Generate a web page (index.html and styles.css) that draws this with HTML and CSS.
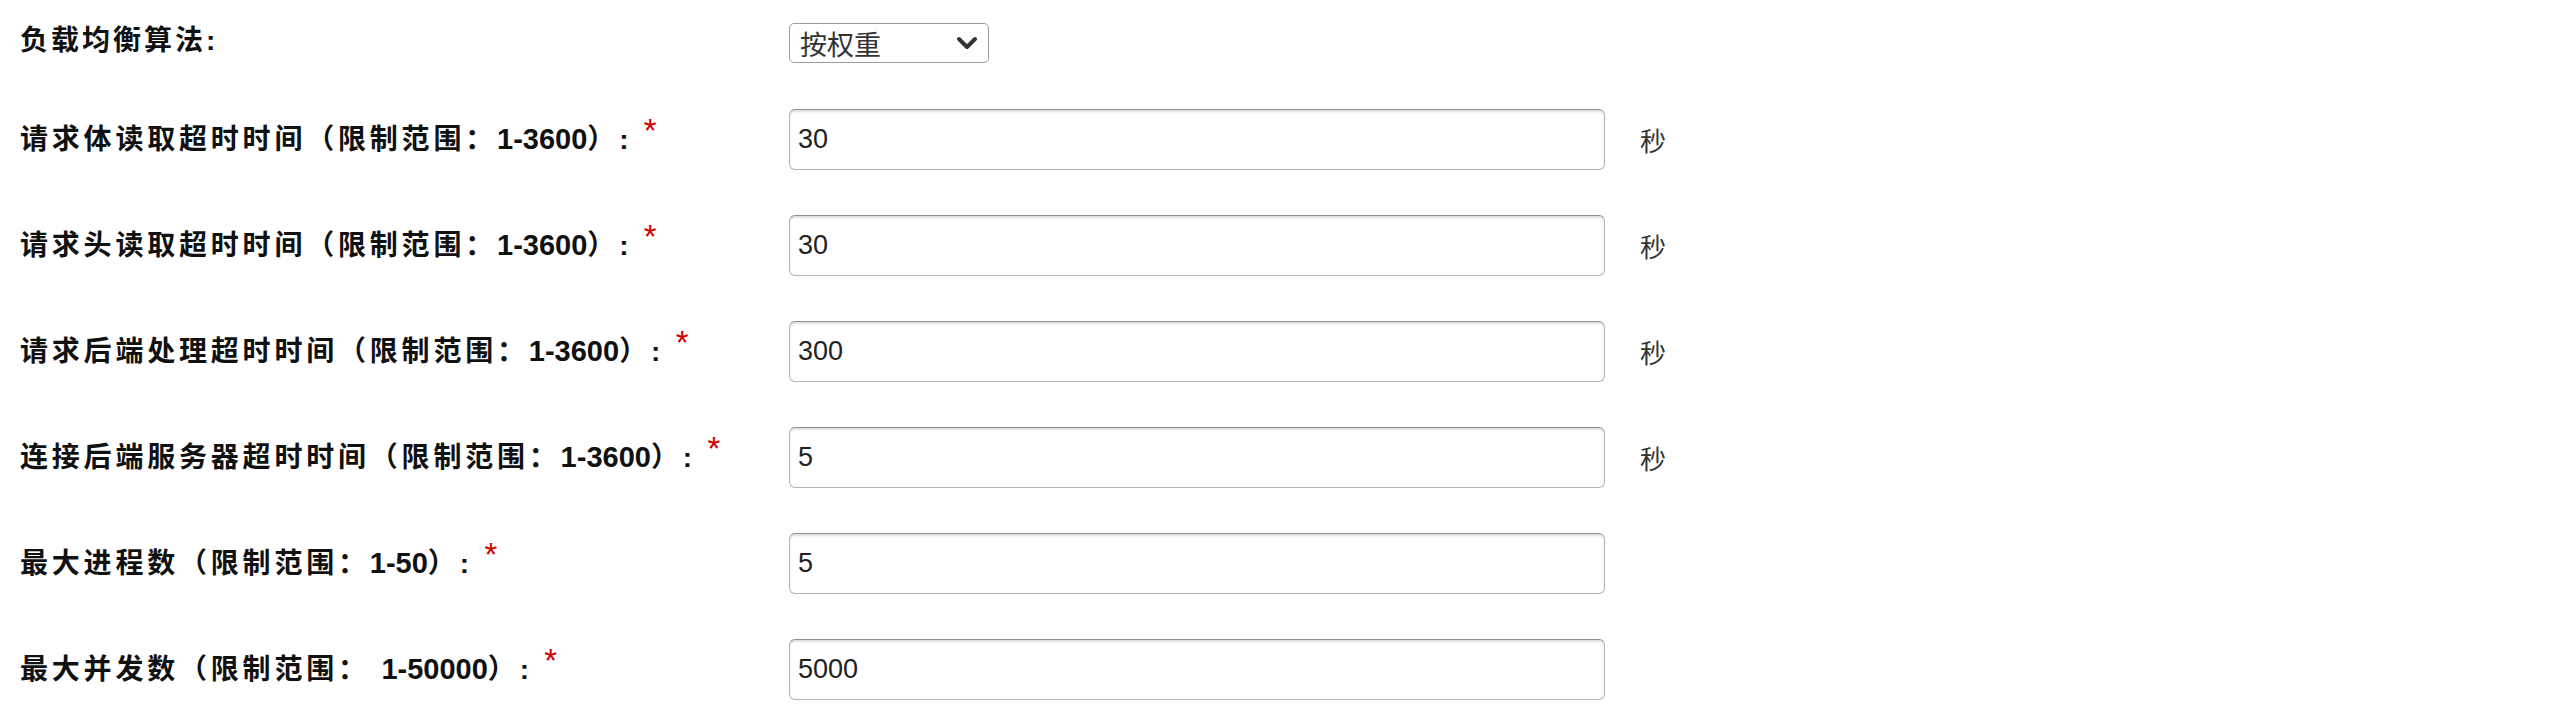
FILE: index.html
```html
<!DOCTYPE html>
<html lang="zh-CN">
<head>
<meta charset="utf-8">
<title>负载均衡设置</title>
<link rel="stylesheet" href="styles.css">
</head>
<body>
<form class="form">
  <div class="row row-first">
    <label class="label label-first">负载均衡算法:</label>
    <div class="control">
      <div class="select">
        <span class="select-text">按权重</span>
        <svg class="chevron" width="22" height="14" viewBox="0 0 22 14"><path d="M3 3 L11 11 L19 3" fill="none" stroke="#333" stroke-width="4" stroke-linecap="round" stroke-linejoin="round"/></svg>
      </div>
    </div>
    <span class="unit"></span>
  </div>
  <div class="row">
    <label class="label">请求体读取超时时间（限制范围：<span class="num">1-3600</span>）: <span class="req">*</span></label>
    <div class="control"><input class="input" type="text" value="30"></div>
    <span class="unit">秒</span>
  </div>
  <div class="row">
    <label class="label">请求头读取超时时间（限制范围：<span class="num">1-3600</span>）: <span class="req">*</span></label>
    <div class="control"><input class="input" type="text" value="30"></div>
    <span class="unit">秒</span>
  </div>
  <div class="row">
    <label class="label">请求后端处理超时时间（限制范围：<span class="num">1-3600</span>）: <span class="req">*</span></label>
    <div class="control"><input class="input" type="text" value="300"></div>
    <span class="unit">秒</span>
  </div>
  <div class="row">
    <label class="label">连接后端服务器超时时间（限制范围：<span class="num">1-3600</span>）: <span class="req">*</span></label>
    <div class="control"><input class="input" type="text" value="5"></div>
    <span class="unit">秒</span>
  </div>
  <div class="row">
    <label class="label">最大进程数（限制范围：<span class="num">1-50</span>）: <span class="req">*</span></label>
    <div class="control"><input class="input" type="text" value="5"></div>
    <span class="unit"></span>
  </div>
  <div class="row">
    <label class="label">最大并发数（限制范围： <span class="num">1-50000</span>）: <span class="req">*</span></label>
    <div class="control"><input class="input" type="text" value="5000"></div>
    <span class="unit"></span>
  </div>
</form>
</body>
</html>
```
FILE: styles.css
```css
html, body {
  margin: 0;
  padding: 0;
  background: #ffffff;
}

body {
  font-family: "Liberation Sans", "Noto Sans CJK SC", sans-serif;
  color: #222;
}

.form {
  display: flex;
  flex-direction: column;
  gap: 45px;
  padding: 23px 0 0 20px;
}

.row {
  display: grid;
  grid-template-columns: 769px 816px auto;
  align-items: center;
}

.row-first {
  margin-bottom: 1px;
}

.label {
  font-family: "Liberation Sans", "Noto Sans CJK SC", sans-serif;
  font-weight: bold;
  font-size: 28px;
  line-height: 32px;
  letter-spacing: 3.8px;
  color: #111;
  white-space: nowrap;
}

.label-first {
  align-self: start;
  padding-top: 2px;
  letter-spacing: 3px;
}

.num {
  font-size: 29px;
  letter-spacing: 0;
}

.req {
  color: #d40000;
  font-size: 33px;
  line-height: 0;
  vertical-align: 7px;
  font-weight: normal;
  letter-spacing: 0;
}

.control {
  display: flex;
}

.select {
  box-sizing: border-box;
  width: 200px;
  height: 40px;
  border: 1px solid #9a9a9a;
  border-radius: 5px;
  display: flex;
  align-items: center;
  justify-content: space-between;
  padding: 0 10px 0 10px;
  background: #fff;
}

.select-text {
  font-family: "Noto Sans CJK SC", sans-serif;
  font-size: 27px;
  color: #333;
  line-height: 1;
}

.chevron {
  display: block;
}

.input {
  box-sizing: border-box;
  width: 816px;
  height: 61px;
  margin: 0;
  border: 1px solid #b5b5b5;
  border-top-color: #8f8f8f;
  border-radius: 6px;
  box-shadow: inset 0 2px 2px rgba(0, 0, 0, 0.12);
  padding: 0 8px;
  font-family: "Liberation Sans", sans-serif;
  font-size: 27px;
  color: #222;
  background: #fff;
  outline: none;
}

.unit {
  margin-left: 35px;
  font-family: "Noto Sans CJK SC", sans-serif;
  font-size: 26px;
  color: #333;
}
```
